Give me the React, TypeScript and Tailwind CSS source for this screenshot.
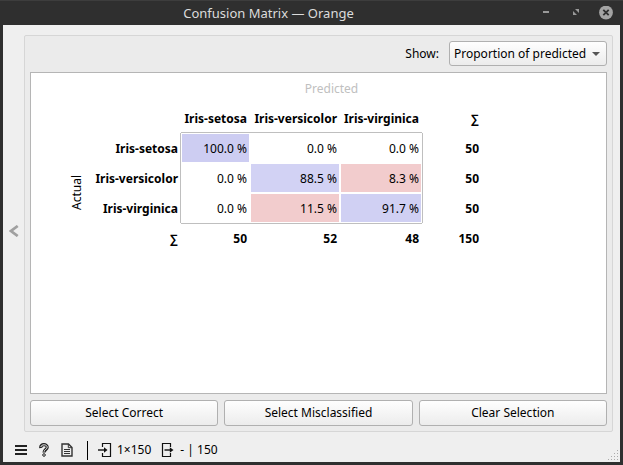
import React from "react";

const names = ["Iris-setosa", "Iris-versicolor", "Iris-virginica"];

const rows = [
  { total: "50", cells: [{ v: "100.0 %", c: "bg-[#cdcdf2]" }, { v: "0.0 %", c: "" }, { v: "0.0 %", c: "" }] },
  { total: "50", cells: [{ v: "0.0 %", c: "" }, { v: "88.5 %", c: "bg-[#d2d2f4]" }, { v: "8.3 %", c: "bg-[#f2cccd]" }] },
  { total: "50", cells: [{ v: "0.0 %", c: "" }, { v: "11.5 %", c: "bg-[#f2cccd]" }, { v: "91.7 %", c: "bg-[#d0d0f3]" }] },
];

const columnTotals = ["50", "52", "48"];

const buttonClass =
  "h-[26px] flex-1 rounded-[3px] border border-[#b0b0b0] bg-gradient-to-b from-[#fefefe] to-[#ececec] text-center";

function TitleBar() {
  return (
    <header className="flex h-[25px] shrink-0 items-center border-t border-[#3d3d3d] bg-[#2f2f2f] text-[13px] text-[#dcdcdc]">
      <h1 className="flex-1 pr-0.5 text-center leading-6">Confusion Matrix — Orange</h1>
      <div className="flex w-[84px] items-center gap-4">
        <button aria-label="Minimize" className="size-3.5">
          <svg viewBox="0 0 14 14" className="size-3.5"><path d="M4 5h6v2H4z" fill="#999" /></svg>
        </button>
        <button aria-label="Maximize" className="size-3.5">
          <svg viewBox="0 0 14 14" className="size-3.5"><path d="M6 3h4v4zM4 5l4 4H4z" fill="#999" /></svg>
        </button>
        <button aria-label="Close" className="size-3.5">
          <svg viewBox="0 0 14 14" className="size-3.5">
            <circle cx="7" cy="6.5" r="6.9" fill="#a3a3a3" />
            <path d="M4.3 3.8l5.4 5.4M9.7 3.8L4.3 9.2" stroke="#2f2f2f" strokeWidth="1.8" />
          </svg>
        </button>
      </div>
    </header>
  );
}

function Matrix() {
  return (
    <table className="ml-[31px] w-[420px] table-fixed border-separate border-spacing-0 text-right leading-[18px]">
      <colgroup>
        <col className="w-[30px]" />
        <col className="w-[89px]" />
        <col className="w-[69px]" />
        <col className="w-[90px]" />
        <col className="w-[82px]" />
        <col className="w-[60px]" />
      </colgroup>
      <thead>
        <tr className="h-[30px]">
          <td colSpan={2} className="p-0" />
          <th colSpan={4} className="p-0 pt-0.5 text-center font-normal text-[#c0c0c0]">Predicted</th>
        </tr>
        <tr className="h-[30px]">
          <td colSpan={2} className="p-0" />
          {names.map((name) => (
            <th key={name} scope="col" className="whitespace-nowrap border-b border-[#bfbfbf] p-0 pt-0.5 pr-[3px] font-bold">
              {name}
            </th>
          ))}
          <th scope="col" className="p-0 pt-0.5 pr-[3px] font-bold">∑</th>
        </tr>
      </thead>
      <tbody>
        {rows.map((row, i) => (
          <tr key={names[i]} className="h-[30px]">
            {i === 0 && (
              <th rowSpan={4} scope="rowgroup" className="p-0 font-normal">
                <div className="flex items-center justify-center">
                  <span className="rotate-180 [writing-mode:vertical-rl]">Actual</span>
                </div>
              </th>
            )}
            <th scope="row" className="whitespace-nowrap border-r border-[#bfbfbf] p-0 pt-0.5 pr-0.5 font-bold">{names[i]}</th>
            {row.cells.map((cell, j) => (
              <td key={j} className="p-px">
                <div className={"h-7 pt-0.5 pr-0.5 leading-[26px] " + cell.c}>{cell.v}</div>
              </td>
            ))}
            <td className="border-l border-[#bfbfbf] p-0 pt-0.5 pr-[3px] font-bold">{row.total}</td>
          </tr>
        ))}
        <tr className="h-[30px]">
          <th scope="row" className="p-0 pt-0.5 pr-[3px] font-bold">∑</th>
          {columnTotals.map((total) => (
            <td key={total} className="border-t border-[#bfbfbf] p-0 pr-[3px] font-bold">{total}</td>
          ))}
          <td className="p-0 pt-0.5 pr-[3px] font-bold">150</td>
        </tr>
      </tbody>
    </table>
  );
}

function StatusBar() {
  return (
    <footer className="flex h-[30px] shrink-0 items-center pt-1.5 pl-3">
      <button aria-label="Menu" className="mr-3">
        <svg viewBox="0 0 12 12" className="size-3"><path d="M0 1h12v2H0zM0 5h12v2H0zM0 9h12v2H0z" fill="#222" /></svg>
      </button>
      <button aria-label="Help" className="mr-3">
        <svg viewBox="0 0 10 14" className="h-3.5 w-2.5" fill="none">
          <path d="M1.8 4.9C1.2 .7 8.2 .7 8.2 4.2C8.2 6.4 5 6.6 5 9.5" stroke="#222" strokeWidth="3.2" />
          <path d="M1.8 4C2.2 1.1 8.2 1 8.2 4.2C8.2 6.4 5 6.6 5 8.7" stroke="#eee" strokeWidth="1" />
          <circle cx="5" cy="12" r="1.3" fill="#eee" stroke="#222" />
        </svg>
      </button>
      <button aria-label="Report">
        <svg viewBox="0 0 12 14" className="h-3.5 w-3" fill="none" stroke="#333">
          <path d="M1 1h6.5L11 4.5V13H1z" strokeWidth="1.4" />
          <path d="M7.3 1v3.7H11M3 6.5h6M3 8.5h6M3 10.5h6" />
        </svg>
      </button>
      <div className="mr-2.5 ml-3.5 h-[19px] w-px bg-black" />
      <svg viewBox="0 0 14 14" className="h-3.5 w-3.5" fill="none" stroke="#111">
        <path d="M4.5 4V.5h8v13h-8V10" strokeWidth="1.2" />
        <path d="M0 7h7" strokeWidth="1.4" />
        <path d="M6 4.3L9.5 7L6 9.7z" fill="#111" stroke="none" />
      </svg>
      <span className="mr-2.5 ml-[5px]">1×150</span>
      <svg viewBox="0 0 14 14" className="h-3.5 w-3.5" fill="none" stroke="#111">
        <path d="M9.5 4V.5h-8v13h8V10" strokeWidth="1.2" />
        <path d="M3.5 7H10" strokeWidth="1.4" />
        <path d="M8.8 4.3L12.5 7L8.8 9.7z" fill="#111" stroke="none" />
      </svg>
      <span className="ml-[5px]">- | 150</span>
      <svg viewBox="0 0 12 12" className="mt-auto mr-px mb-px ml-auto size-3" fill="#aaa">
        <path d="M10 1h1v1h-1zM7 4h1v1H7zM10 4h1v1h-1zM4 7h1v1H4zM7 7h1v1H7zM10 7h1v1h-1zM1 10h1v1H1zM4 10h1v1H4zM7 10h1v1H7zM10 10h1v1h-1z" />
      </svg>
    </footer>
  );
}

export default function App() {
  return (
    <div className="flex min-h-screen flex-col bg-[#2f2f2f] font-['Noto_Sans',sans-serif] text-xs text-black">
      <TitleBar />
      <div className="mx-[3px] mb-[3px] flex flex-1 flex-col bg-[#efefef]">
        <div className="flex flex-1 pt-2.5 pr-[7px]">
          <button aria-label="Hide control area" className="flex w-[21px] items-center justify-center pb-1.5">
            <svg viewBox="0 0 10 12" className="h-3 w-2.5" fill="none"><path d="M8.7 1L2 6l6.7 5" stroke="#a0a0a0" strokeWidth="2.8" /></svg>
          </button>
          <main className="flex flex-1 flex-col gap-1.5 rounded-[2px] border border-[#d6d6d6] bg-[#ebebeb] p-[5px]">
            <div className="flex items-center justify-end gap-2.5">
              <label htmlFor="show">Show:</label>
              <div className="relative">
                <select
                  id="show"
                  defaultValue="Proportion of predicted"
                  className="block h-[25px] w-[158px] appearance-none rounded-[3px] border border-[#b0b0b0] bg-gradient-to-b from-[#fefefe] to-[#ececec] pl-1"
                >
                  <option>Number of instances</option>
                  <option>Proportion of predicted</option>
                  <option>Proportion of actual</option>
                </select>
                <svg viewBox="0 0 8 4" className="pointer-events-none absolute top-[11px] right-[7px] h-1 w-2"><path d="M0 0h8L4 4z" fill="#555" /></svg>
              </div>
            </div>
            <div className="flex-1 border border-[#b5b5b5] bg-white">
              <Matrix />
            </div>
            <div className="flex gap-1.5">
              <button className={buttonClass}>Select Correct</button>
              <button className={buttonClass}>Select Misclassified</button>
              <button className={buttonClass}>Clear Selection</button>
            </div>
          </main>
        </div>
        <StatusBar />
      </div>
    </div>
  );
}
